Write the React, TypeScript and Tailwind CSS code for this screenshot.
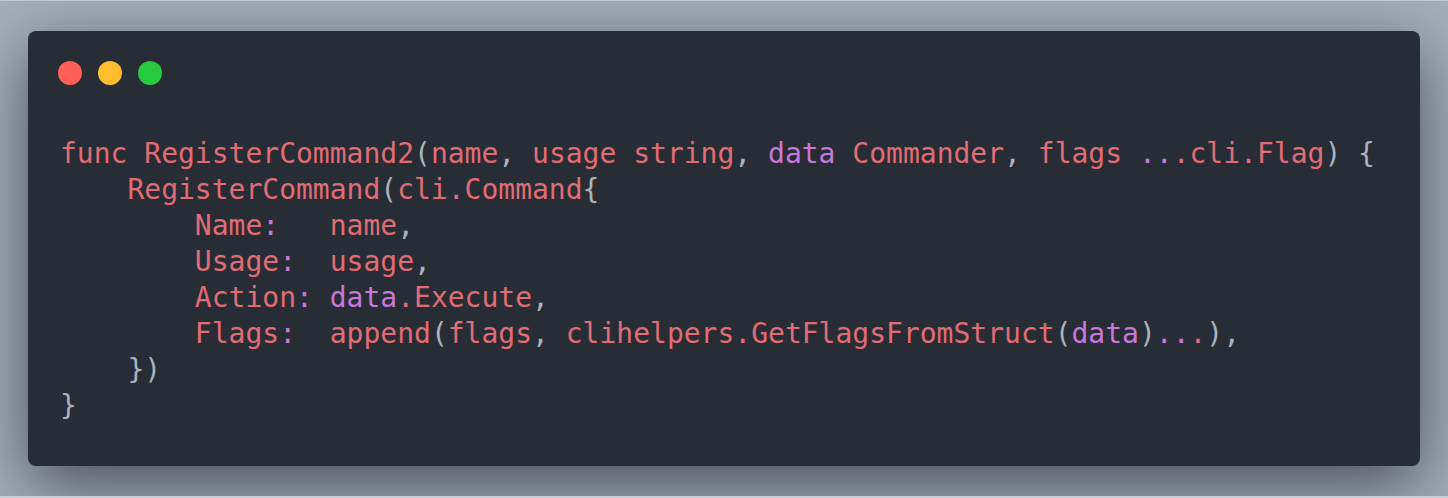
import React from "react";

const R = "text-[#e06c75]";
const P = "text-[#c678dd]";
const G = "text-[#abb2bf]";

type Tok = [string, string];

const lines: Tok[][] = [
  [
    ["func RegisterCommand2", R], ["(", G], ["name", R], [", ", G], ["usage string", R], [", ", G],
    ["data", P], [" Commander", R], [", ", G], ["flags ", R], ["..", P], [".cli.Flag", R], [") {", G],
  ],
  [["    RegisterCommand", R], ["(", G], ["cli.Command", R], ["{", G]],
  [["        Name", R], [":", P], ["   name", R], [",", G]],
  [["        Usage", R], [":", P], ["  usage", R], [",", G]],
  [["        Action", R], [":", P], [" ", R], ["data", P], [".Execute", R], [",", G]],
  [
    ["        Flags", R], [":", P], ["  append", R], ["(", G], ["flags", R], [", ", G],
    ["clihelpers.GetFlagsFromStruct", R], ["(", G], ["data", P], [")", G], ["..", P], [".", R], ["),", G],
  ],
  [["    })", G]],
  [["}", G]],
];

export default function App() {
  return (
    <div className="h-[498px] w-[1448px] overflow-hidden bg-[#a3afba] border-t border-t-[#c3cbd2] border-b-2 border-b-[#c6cdd3] pt-[30px] px-[28px]">
      <div className="h-[435px] rounded-[8px] bg-[#282c34] shadow-[0_20px_68px_rgba(0,0,0,0.55)] pt-[30px] pl-[30px] flex flex-col">
        <div className="flex gap-[16px]">
          <div className="w-[24px] h-[24px] rounded-full bg-[#ff5f56]" />
          <div className="w-[24px] h-[24px] rounded-full bg-[#ffbd2e]" />
          <div className="w-[24px] h-[24px] rounded-full bg-[#27c93f]" />
        </div>
        <pre
          className="mt-[51px] pl-[2px] text-[28px] leading-[36px] whitespace-pre"
          style={{ fontFamily: '"DejaVu Sans Mono", monospace' }}
        >
          {lines.map((ln, i) => (
            <div key={i} className="h-[36px]">
              {ln.map(([t, c], j) => (
                <span key={j} className={c}>{t}</span>
              ))}
            </div>
          ))}
        </pre>
      </div>
    </div>
  );
}
